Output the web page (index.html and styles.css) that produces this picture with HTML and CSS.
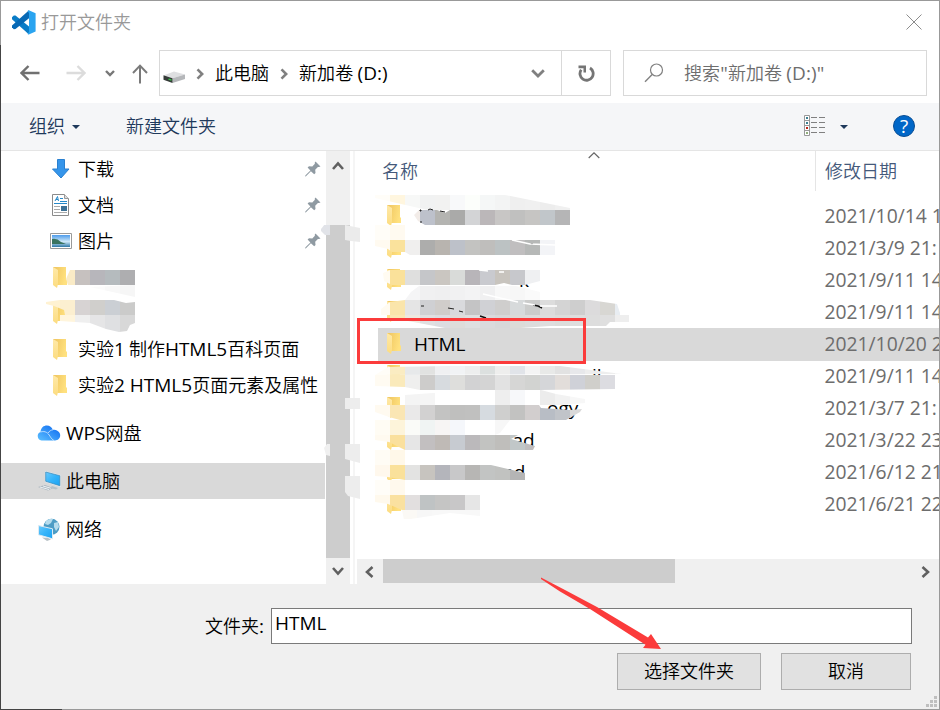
FILE: index.html
```
<!DOCTYPE html>
<html lang="zh-CN">
<head>
  <meta charset="UTF-8" />
  <meta name="viewport" content="width=device-width, initial-scale=1.0" />
  <title>打开文件夹</title>
  <link rel="stylesheet" href="styles.css">
</head>
<body>
  <!-- shared icons -->
  <svg class="defs" width="0" height="0">
    <defs>
      <linearGradient id="fold" x1="0" x2="1" y1="0" y2="0.3">
        <stop offset="0" stop-color="#eec35e"/><stop offset="1" stop-color="#ffe17f"/>
      </linearGradient>
      <linearGradient id="leaf" x1="0" x2="0" y1="0" y2="1">
        <stop offset="0" stop-color="#ffe9a8"/><stop offset="1" stop-color="#fcdc80"/>
      </linearGradient>
      <linearGradient id="sky" x1="0" x2="0" y1="0" y2="1">
        <stop offset="0" stop-color="#4e9cec"/><stop offset="0.55" stop-color="#cfe8f7"/><stop offset="1" stop-color="#2d77a6"/>
      </linearGradient>
      <linearGradient id="cloud" x1="0" x2="1" y1="1" y2="0">
        <stop offset="0" stop-color="#5cc0ff"/><stop offset="1" stop-color="#0a66f0"/>
      </linearGradient>
      <linearGradient id="screen" x1="0" x2="1" y1="0" y2="1">
        <stop offset="0" stop-color="#6cc9fb"/><stop offset="0.5" stop-color="#35b4fa"/><stop offset="1" stop-color="#1ba2f2"/>
      </linearGradient>
      <symbol id="i-folder" viewBox="0 0 14 21">
        <path d="M0 0h13v12l1 1v5H4z" fill="url(#fold)"/>
        <path d="M0 0l5 3v14l-1 4-4-3z" fill="url(#leaf)"/>
      </symbol>
      <symbol id="i-pin" viewBox="0 0 16 16">
        <path d="M10.5 0.5l5 5-1.6.6-1 -.2-2.7 2.9.3 3.2-1.3 1.3-3.3-3.1L1 15.2l-1 .3.5-1.3L5.4 9.6 2.6 6.5 4 5.2l3.3.3 2.6-2.8-.2-1z" fill="#8f9aa2"/>
      </symbol>
    </defs>
  </svg>

  <div class="window">
    <div class="titlebar">
      <svg class="logo" width="25" height="25" viewBox="0 0 25 25">
        <path d="M1 7.2L2.8 5.5 4.5 5.6 18 16.5V24.5L1 9.2z" fill="#0a7cc7"/>
        <path d="M1 17.2L2.8 19.2 4.5 19.1 18 8.3V0.3L1 15.6z" fill="#0769b5"/>
        <path d="M17.8 0.2L24.6 3.3V21.5L17.8 24.6 16.5 24 18 22V3L16.5 1z" fill="#2aa4f0"/>
      </svg>
      <span class="title">打开文件夹</span>
      <svg class="close" width="16" height="16" viewBox="0 0 16 16"><path d="M.5.5l15 15M15.5.5l-15 15" stroke="#8c8c8c" fill="none"/></svg>
    </div>

    <div class="navbar">
      <div class="arrows">
        <svg width="20" height="16" viewBox="0 0 20 16"><path d="M19.5 8H2M8.5 1L1.5 8l7 7" fill="none" stroke="#707070" stroke-width="2.4"/></svg>
        <svg width="20" height="16" viewBox="0 0 20 16"><path d="M.5 8H18M11.5 1l7 7-7 7" fill="none" stroke="#dcdcdc" stroke-width="2.4"/></svg>
        <svg width="10" height="7" viewBox="0 0 10 7"><path d="M1 1l4 4 4-4" fill="none" stroke="#777" stroke-width="2.4"/></svg>
        <svg width="16" height="20" viewBox="0 0 16 20"><path d="M8 19.5V2M1 9l7-7.4L15 9" fill="none" stroke="#7a7a7a" stroke-width="2"/></svg>
      </div>
      <div class="address">
        <svg class="drive" width="23" height="12" viewBox="0 0 23 12">
          <path d="M1 4.2L11 .5 22 3.4 9.5 7.3z" fill="#dedfe1"/>
          <path d="M9.5 7.3L22 3.4V8L9.5 12z" fill="#b5b7ba"/>
          <path d="M.5 4.2l9 3.1V12l-9-3.2z" fill="#353b38"/>
          <path d="M5.5 8.2l3 1" stroke="#38c84a" stroke-width="1.3"/>
        </svg>
        <svg class="sep" width="8" height="12" viewBox="0 0 8 12"><path d="M1.5 1.3L6.2 6l-4.7 4.7" fill="none" stroke="#808080" stroke-width="2.6"/></svg>
        <span class="crumb">此电脑</span>
        <svg class="sep second" width="8" height="12" viewBox="0 0 8 12"><path d="M1.5 1.3L6.2 6l-4.7 4.7" fill="none" stroke="#808080" stroke-width="2.6"/></svg>
        <span class="crumb last">新加卷 <span class="latin">(D:)</span></span>
        <svg class="drop" width="14" height="9" viewBox="0 0 14 9"><path d="M1.2 1.3L7 7l5.8-5.7" fill="none" stroke="#808080" stroke-width="2.8"/></svg>
        <div class="refresh">
          <svg width="17" height="17" viewBox="0 0 17 17"><path d="M3.2 4.8A6.6 6.6 0 1 0 12 3" fill="none" stroke="#757575" stroke-width="2.8"/><path d="M.5.5H8v7H5.5V3.2H.5z" fill="#757575"/></svg>
        </div>
      </div>
      <div class="search">
        <svg width="20" height="20" viewBox="0 0 20 20"><circle cx="12.5" cy="7" r="6" fill="none" stroke="#808080" stroke-width="1.2"/><path d="M8.2 11.5L1 18.7" stroke="#808080" stroke-width="1.4"/></svg>
        <span>搜索<span class="latin">"</span>新加卷 <span class="latin">(D:)"</span></span>
      </div>
    </div>

    <div class="toolbar">
      <span>组织</span>
      <i class="caret"></i>
      <span class="newfolder">新建文件夹</span>
      <svg class="views" width="22" height="22" viewBox="0 0 22 22">
        <path d="M.5.5h5v20h-5zM.5 5.5h5M.5 10.5h5M.5 15.5h5" fill="#fff" stroke="#999"/>
        <path d="M7 2.5h6M15 2.5h6M7 7.5h6M15 7.5h6M7 12.5h6M15 12.5h6M7 17.5h6M15 17.5h6" stroke="#808080"/>
        <path d="M2 2h2v2H2zM2 7h2v2H2z" fill="#3d8092"/><path d="M2 12h2v2H2z" fill="#c02418"/><path d="M2 17h2v2H2z" fill="#8fae7c"/>
      </svg>
      <i class="caret"></i>
      <div class="help">?</div>
    </div>

    <div class="main">
      <div class="tree">
        <div class="node sub">
          <svg width="22" height="22" viewBox="0 0 22 22"><path d="M7.5 1.5h7V11H19l-8 9-8.500-9h5z" fill="#3595ea" stroke="#2a80d0"/></svg>
          <span>下载</span><svg class="pin" width="16" height="16"><use href="#i-pin"/></svg>
        </div>
        <div class="node sub">
          <svg width="22" height="22" viewBox="0 0 22 22">
            <path d="M2.5.5h12l4 4v17h-16z" fill="#fff" stroke="#8b8b8b"/><path d="M14.5.5v4h4" fill="#ddd" stroke="#999"/>
            <path d="M5 7l2.500-4.500L8.500 7M6 5.500h2M10 4.500h3M10 7.500h7M4 9.500h13" stroke="#2689c9" fill="none"/>
            <path d="M4 12.500h6M4 15.500h6M4 18.500h13" stroke="#aaa"/><path d="M11 12h6v5h-6z" fill="#3d7195"/>
          </svg>
          <span>文档</span><svg class="pin" width="16" height="16"><use href="#i-pin"/></svg>
        </div>
        <div class="node sub">
          <svg width="22" height="22" viewBox="0 0 22 22">
            <path d="M.5 3.5h21v15H.5z" fill="#fff" stroke="#9a9a9a"/><path d="M2 5h18v12H2z" fill="url(#sky)"/>
            <path d="M2 9q5-1 9 3l5 2H2z" fill="#3b7460"/>
          </svg>
          <span>图片</span><svg class="pin" width="16" height="16"><use href="#i-pin"/></svg>
        </div>
        <div class="node sub"><svg class="folder" width="14" height="21"><use href="#i-folder"/></svg></div>
        <div class="node sub"><svg class="folder" width="14" height="21"><use href="#i-folder"/></svg></div>
        <div class="node sub"><svg class="folder" width="14" height="21"><use href="#i-folder"/></svg><span>实验<span class="latin">1</span> 制作<span class="latin">HTML5</span>百科页面</span></div>
        <div class="node sub"><svg class="folder" width="14" height="21"><use href="#i-folder"/></svg><span>实验<span class="latin">2 HTML5</span>页面元素及属性</span></div>
        <div class="node root">
          <svg width="24" height="22" viewBox="0 0 24 22">
            <path d="M4.5 18.5a4.5 4.5 0 0 1-1-8.6C4 5.5 6.8 3.5 9.8 3.5c3 0 5 1.8 6 4.2 4 0 7.4 2 7.4 5.6 0 3.3-2.5 5.2-5 5.2z" fill="url(#cloud)"/>
            <path d="M3.5 10c5-1.5 7.5 1 9.5 4.3 1.2 2 2.5 3.5 4 4.2M11 11c1.5-2 3-3 5-3.2" stroke="#d7ecff" fill="none" stroke-width=".8"/>
          </svg>
          <span><span class="latin">WPS</span>网盘</span>
        </div>
        <div class="node root selected">
          <svg width="24" height="22" viewBox="0 0 24 22">
            <path d="M8 1l15.500 4v12L8 12z" fill="#e4eef4"/><path d="M8.700 2l14.100 3.700v10L8.700 11.300z" fill="url(#screen)" stroke="#3686b8" stroke-width=".7"/>
            <path d="M1 17l7-2 8 3-5 2.500z" fill="#aab6bf"/><path d="M3 17l9 2.500M6 16l8 2.300" stroke="#edf1f4"/><path d="M13 18l6 1.500 2-1.500-6-2z" fill="#b6c2ca"/>
          </svg>
          <span>此电脑</span>
        </div>
        <div class="node root">
          <svg width="24" height="23" viewBox="0 0 24 23">
            <circle cx="14.5" cy="8.8" r="8" fill="#4d9cc5"/><path d="M9 3q4-3 7-2l-2 4-3 2-3-1zM17 5l4-1 1 5-3 4-2-4z" fill="#b6dced"/>
            <path d="M1.5 7.5l14 3.3v10l-14-4z" fill="url(#screen)" stroke="#dcebf4"/><path d="M5 19.500l6 .5 3 1.500-4 1.500z" fill="#b7c0c6"/>
          </svg>
          <span>网络</span>
        </div>
      </div>

      <div class="vscroll">
        <div class="up"><svg width="12" height="10" viewBox="0 0 12 10"><path d="M1 8l5-5.5L11 8" fill="none" stroke="#606060" stroke-width="2.6"/></svg></div>
        <div class="vthumb"></div>
        <div class="down"><svg width="12" height="10" viewBox="0 0 12 10"><path d="M1 2l5 5.5L11 2" fill="none" stroke="#606060" stroke-width="2.6"/></svg></div>
      </div>
      <div class="splitter"></div>

      <div class="files">
        <div class="head">
          <div class="name">名称</div>
          <div class="date">修改日期</div>
          <svg class="sort" width="12" height="7" viewBox="0 0 12 7"><path d="M.7 6L6 .9 11.3 6" fill="none" stroke="#666" stroke-width="1.2"/></svg>
        </div>
        <div class="rows" id="rows"></div>
        <div class="hscroll">
          <svg width="9" height="12" viewBox="0 0 9 12"><path d="M7.5 1L2 6l5.5 5" fill="none" stroke="#606060" stroke-width="2.6"/></svg>
          <div class="hthumb"></div>
          <svg width="9" height="12" viewBox="0 0 9 12"><path d="M1.5 1L7 6l-5.5 5" fill="none" stroke="#606060" stroke-width="2.6"/></svg>
        </div>
      </div>
    </div>

    <div class="bottom">
      <div class="field">
        <label>文件夹<span class="latin">:</span></label>
        <div class="input latin">HTML</div>
      </div>
      <div class="actions">
        <div class="btn ok">选择文件夹</div>
        <div class="btn cancel">取消</div>
      </div>
    </div>
    <svg class="grip" width="12" height="12" viewBox="0 0 12 12"><path d="M8 0h3v3H8zM4 4h3v3H4zM8 4h3v3H8zM0 8h3v3H0zM4 8h3v3H4zM8 8h3v3H8z" fill="#bfbfbf"/></svg>

    <!-- pixelated names, highlight box and arrow lie over the dialog -->
    <svg class="marks" width="940" height="710" viewBox="0 0 940 710">
      <path d="M.5 45V710M0 709.5H62" stroke="#444"/>
      <g id="mosaic" shape-rendering="crispEdges"></g>
      <path d="M420 210h1v1h-1zM428 210l2-1 3 1M440 211l5 1M420 222h2M531 244h2M421 306h3M448 308l6 1M459 311l4 1" stroke="#222" fill="none"/>
      <path d="M533 305l5 1 4 2M480 316l6 2" stroke="#111" fill="none" stroke-width="1.5"/>
      <path d="M512 240l18 4 25 1M479 270l9 1M499 272h5M483 294l35 8M523 303l12 2M540 306h17" stroke="#fff" fill="none" stroke-width="1.5"/>
      <rect x="358.5" y="319.5" width="226" height="43" fill="none" stroke="#fb3b3b" stroke-width="3"/>
      <path d="M541 577.5L565 590 597 607 648 637.5 651 634 661 649 643 648 645.5 644.8 590 609 560 591.5 541 579z" fill="#fb3b3b"/>
    </svg>
  </div>

  <script>
    const dates = ["2021/10/14 1", "2021/3/9 21:", "2021/9/11 14", "2021/9/11 14", "2021/10/20 2",
      "2021/9/11 14", "2021/3/7 21:", "2021/3/22 23", "2021/6/12 21", "2021/6/21 22"];
    const leftovers = { 2: "k", 5: "ll", 6: "ogy", 7: "oad", 8: "nd" };

    document.getElementById("rows").innerHTML = dates.map((d, i) => `
      <div class="row ${i === 4 ? "selected" : ""}">
        <svg width="14" height="21"><use href="#i-folder"/></svg>
        <div class="name latin">${i === 4 ? "HTML" : `<span class="rest r${i}">${leftovers[i] || ""}</span>`}</div>
        <div class="date latin">${d}</div>
      </div>`).join("");

    // strips of 15px cells: x, y, height, colours, outline
    const strips = [
      [375, 195, 15, "fffdf8 fff6df f7f8f7 f1f2f2 f2f2f1 f8f9fa fcfefb f5f7f7 f3f4f4 efefef f0f0f0 ededed f0f0f0", "375,195 505,195 570,208 570,210 428,210 410,206 375,198"],
      [405, 210, 15, "f2ece8 bdc1cb b4b4b1 aaaaa9 d3d4d6 bbb7b9 c8c6c5 c0c0bf c6c5c3 c1c6ca b5b5b6", "419,210 437,210 445,213 450,210 570,210 570,225 425,225 418,221 414,215"],
      [375, 225, 15, "fffdf8 fffaf0", "375,225 405,225 405,240 375,240"],
      [375, 240, 15, "fffaf0 fae29c f0efee adadac b8b4af bdc1c9 c3c3c1 bfbebc bcc2c3 c0bebf b6b8b7 f3f4f7", "375,240 555,240 555,255 410,255 405,252 392,252 388,249 375,246"],
      [375, 270, 15, "fffbf1 fae19a dfdfde c5c6c9 cac6c1 d9dbd9 b8b5b9 c9cacf c8c4be c7c8cc eff0f2", "383,273 390,270 540,270 540,281 525,285 512,285 504,283 495,285 392,285 384,281"],
      [405, 285, 15, "f5f5f6 f0f0f1 efeff0 f1f1f2 f3f3f4 f0f0f1 f8f8f8 f7f7f7 fafafa", "411,292 419,286 516,286 540,292 540,300 405,300"],
      [375, 300, 15, "fffbf1 fae5ab e5e5e5 cfd0d3 d0cdca d9dadd c4c4c5 d0d1d5 cfcecd d7dadb cbcccb dcdcdc d4d4d4 cecece dcdbdc d8d7d3 e8edf2", "381,309 390,302 405,300 590,300 617,304 620,313 620,315 381,315"],
      [390, 315, 13, "fbe8b5 eee9df e0e0e1 dcdde1 dedcda dedfe0 dadadc d7d8d9 dcdbd8 dcdcdc dedede dcdddb dedede dddddd dfdfdf eeeeee", "390,315 629,315 629,322 610,322 606,326 550,326 520,328 445,328 408,321 390,320"],
      [375, 366, 9, "fffdf7 faecc2 e7e9ea e1e2e1 eff0f2 f1f3f5 edeeee dce0df eeeeed e1e4e9 f4f4f4 e8e9e8 e2e2e2 e7e8eb eeeeee eeeeee f6f6f6", "388,367 450,366 560,366 622,374 375,375"],
      [375, 375, 15, "fffbf2 faeabb efefee cdcccb d7dbdf dededc d2d2d3 d4d4d4 e2e2e2 d6d6d5 d2d3d1 d5d6d9 e2ddda cfd1d8 d0cfcb dcdce1", "375,375 615,375 615,389 540,390 420,390 405,387 375,386"],
      [405, 390, 15, "f4f4f4 f5f5f5 ffffff ffffff ffffff ffffff eeeeee f7f8fa ffffff ececec f2f2f2 f7f7f7", "405,395 433,393 495,390 541,390 556,394 585,399 585,403 540,407 405,405"],
      [375, 405, 15, "fffaf0 fae6b4 eae9e9 d2d1d1 c3c3c2 bfbfbe c0c0bf d6dbe0 cfcfce c2c2c1 d2cece b8bdc5 c1c4c9 d9d9d9", "375,405 539,405 541,408 570,410 582,409 580,412 566,420 400,420 389,417 375,412"],
      [375, 420, 15, "fffcf4 fdf4da fafbf8 f0f4f3 f7f5f4 f5f7fb ffffff ffffff f7f7f7", "375,420 510,420 500,433 495,435 375,435"],
      [375, 435, 15, "fffaf0 fae09d e6e6e6 c2bfc0 bfbab6 c7cbd1 bbb9bb c2c3c1 bfbebb c1c7c8 bfbdbe cacdd1", "375,435 518,435 511,439 518,441 535,446 533,450 405,450 389,442 375,440"],
      [375, 450, 15, "fffcf5 fff8e9", "375,450 405,450 405,465 375,465"],
      [375, 465, 15, "fff8ed fae19b e3e3e2 c7c4bf b4b5bb c8c8c9 b7b6b4 c2c4c3 c1c2c0 b5b5b5", "375,465 491,465 508,469 525,473 525,480 405,480 388,477 375,476"],
      [375, 480, 15, "fffdf8 fff9ed", "375,480 405,480 405,495 375,495"],
      [375, 495, 15, "fff9ed fae1a0 e2dfdf bfc3c4 c5c5c4 c8c7c8 e6e6e6", "375,495 480,495 480,510 402,510 388,504 375,502"],
      [402, 510, 9, "fbf9f5 f7f7f7 f8f8f8 f8f8f8 f8f8f8 f8f8f8", "402,510 480,510 480,516 450,513 404,520"],
      [45, 255, 15, "ffffff ffffff ffffff fdfdfd", "75,270 90,259 90,270"],
      [60, 270, 15, "faebc6 c6c1bf b7b6bb b5bbbe aeaeb0", "66,279 70,270 135,270 135,285 68,285"],
      [90, 285, 12, "fbfbfb f8f8f8 f6f6f6", "90,287 135,285 135,297"],
      [45, 300, 15, "fff2d2 fcefd0 d7d3d3 d0cfcc cbcfd4 cbcbca", "46,302 60,300 114,300 126,303 135,302 135,315 65,315 64,310 54,306 46,304"],
      [60, 315, 17, "fff5dc efefef e5e5e6 dfe0e2 d8d8d8", "60,314 135,315 135,323 130,325 127,331 119,332 106,329 90,323 60,321"],
      [321, 225, 10, "e1e3e8", "321,229 325,224 330,224 330,235 325,235 321,231"],
      [345, 225, 18, "ebebeb", "345,225 360,228 360,242 351,241 345,240"],
      [345, 398, 11, "ededed", "345,398 360,398 360,409 345,409"],
      [323, 443, 13, "f0f0f0", "324,448 327,444 330,444 330,456 326,455"],
      [345, 443, 20, "ededed", "345,444 360,444 360,463 345,459"],
      [345, 475, 25, "ededed", "345,476 360,476 360,499 348,496 345,492"]
    ];

    let out = "";
    strips.forEach(([x, y, h, colors, outline], n) => {
      out += `<clipPath id="c${n}"><polygon points="${outline}"/></clipPath><g clip-path="url(#c${n})">`;
      colors.split(" ").forEach((c, i) => {
        out += `<rect x="${x + i * 15}" y="${y}" width="15" height="${h}" fill="#${c}"/>`;
      });
      out += "</g>";
    });
    document.getElementById("mosaic").innerHTML = out;
  </script>
</body>
</html>
```

FILE: styles.css
```
* {
  box-sizing: border-box;
}
body {
  margin: 0;
  width: 940px;
  height: 710px;
  overflow: hidden;
  font-family: "Noto Sans CJK SC", sans-serif;
  font-size: 18px;
  font-weight: 350;
  line-height: 24px;
  color: #000;
}
svg {
  display: block;
  flex: none;
}
.latin {
  font-family: "Open Sans", "Noto Sans CJK SC", sans-serif;
  font-size: 19px;
  font-weight: 400;
}
.defs, .marks {
  position: absolute;
  left: 0;
  top: 0;
}
.window {
  position: relative;
  width: 940px;
  height: 710px;
  border: 1px solid #999;
  background: #fff;
  display: flex;
  flex-direction: column;
}
.marks {
  left: -1px;
  top: -1px;
}

/* title and navigation */
.titlebar {
  height: 43px;
  padding: 0 17px 0 10px;
  display: flex;
  align-items: center;
}
.title {
  flex: 1;
  margin: -3px 0 0 5px;
  color: #999;
}
.close {
  margin-top: -1px;
}
.navbar {
  height: 59px;
  padding: 6px 12px 0 19px;
  display: flex;
}
.arrows {
  width: 139px;
  height: 46px;
  display: flex;
  align-items: center;
}
.arrows svg:nth-child(2) { margin-left: 26px; }
.arrows svg:nth-child(3) { margin-left: 19px; }
.arrows svg:nth-child(4) { margin: 2px 0 0 17px; }
.address {
  width: 452px;
  height: 46px;
  border: 1px solid #d9d9d9;
  display: flex;
  align-items: center;
}
.drive { margin: 7px 0 0 3px; }
.sep { margin: 1px 0 0 10px; }
.crumb { margin: -2px 0 0 11px; }
.sep.second { margin-left: 11px; }
.crumb.last { flex: 1; letter-spacing: 0.1px; }
.drop { margin-right: 16px; }
.refresh {
  width: 49px;
  height: 44px;
  border-left: 1px solid #d9d9d9;
  display: flex;
  align-items: center;
  justify-content: center;
}
.search {
  flex: 1;
  height: 46px;
  margin-left: 12px;
  padding-left: 20px;
  border: 1px solid #d9d9d9;
  color: #6d6d6d;
  display: flex;
  align-items: center;
  gap: 20px;
}
.search > span {
  margin-top: -1px;
  letter-spacing: 0.1px;
}
.toolbar {
  height: 48px;
  padding: 0 24px 0 28px;
  background: #f5f6f8;
  border-bottom: 1px solid #e5e5e5;
  color: #1e395b;
  display: flex;
  align-items: center;
}
.toolbar > span {
  margin-top: -3px;
}
.caret {
  margin-left: 7px;
  border: 4px solid transparent;
  border-top-color: #1e395b;
  border-bottom: 0;
}
.newfolder {
  flex: 1;
  margin-left: 46px;
}
.views {
  margin: -1px 1px 0 0;
}
.views + .caret { margin-left: 13px; }
.help {
  width: 22px;
  height: 22px;
  margin: -2px 0 0 45px;
  border: 1px solid #0a4e94;
  border-radius: 50%;
  background: #0067c8;
  color: #fff;
  font: 19px/20px "Open Sans", sans-serif;
  text-align: center;
}

/* folder tree */
.main {
  height: 433px;
  display: flex;
}
.tree {
  width: 324px;
}
.node {
  height: 36px;
  display: flex;
  align-items: center;
  white-space: nowrap;
}
.node.sub {
  padding-left: 49px;
}
.node.sub > span {
  margin: -2px 0 0 6px;
  flex: 1;
}
.node .folder {
  margin: 0 5px 0 3px;
}
.node .pin {
  margin-right: 4px;
}
.node.root {
  margin-top: 12px;
  padding-left: 36px;
}
.node.root > span {
  margin: -2px 0 0 5px;
}
.selected {
  background: #d9d9d9;
}
.vscroll {
  width: 24px;
  background: #f0f0f0;
  display: flex;
  flex-direction: column;
  align-items: center;
  margin-left: 1px;
}
.up {
  height: 74px;
  padding-top: 10px;
}
.vthumb {
  width: 24px;
  height: 333px;
  background: #cdcdcd;
}
.down {
  padding-top: 8px;
}
.splitter {
  width: 2px;
  margin: 0 2px 0 3px;
  background: #f5f5f5;
}

/* file list */
.files {
  flex: 1;
  min-width: 0;
  display: flex;
  flex-direction: column;
}
.head {
  position: relative;
  height: 40px;
  display: flex;
  line-height: 39px;
  color: #44597a;
}
.head .name {
  width: 459px;
  padding-left: 25px;
  border-right: 1px solid #e5e5e5;
}
.head .date {
  padding-left: 9px;
}
.sort {
  position: absolute;
  left: 231px;
  top: 1px;
}
.rows {
  height: 368px;
  padding: 9px 0 0 21px;
  overflow: hidden;
}
.row {
  height: 32px;
  padding-left: 9px;
  display: flex;
  align-items: center;
  white-space: nowrap;
}
.row.selected {
  height: 33px;
  margin-bottom: -1px;
  padding-bottom: 1px;
}
.row > svg {
  margin-top: -1px;
}
.row .name {
  width: 411px;
  margin-left: 13px;
}
.row .date {
  margin-left: 1px;
  width: 115px;
  overflow: hidden;
  color: #6d6d6d;
  font-size: 19.3px;
}
.rest { display: block; }
.r2 { padding-left: 105px; }
.r5 { padding-left: 178px; }
.r6 { padding-left: 133px; }
.r7 { padding-left: 87px; }
.r8 { padding-left: 88px; }
.hscroll {
  height: 25px;
  padding: 0 9px 0 8px;
  background: #f0f0f0;
  display: flex;
  align-items: center;
}
.hthumb {
  width: 292px;
  height: 24px;
  margin: 0 auto 1px 9px;
  background: #cdcdcd;
}

/* folder field and buttons */
.bottom {
  flex: 1;
  padding: 24px 27px 0 204px;
  background: #f0f0f0;
}
.field {
  display: flex;
  align-items: center;
}
.field label {
  width: 66px;
  margin-top: -2px;
  white-space: nowrap;
}
.input {
  flex: 1;
  height: 36px;
  padding: 2px 3px;
  border: 1px solid #7a7a7a;
  background: #fff;
}
.actions {
  margin: 9px 1px 0 0;
  display: flex;
  justify-content: flex-end;
  gap: 20px;
}
.btn {
  width: 130px;
  height: 37px;
  border: 1px solid #adadad;
  background: #e1e1e1;
  text-align: center;
  line-height: 33px;
}
.btn.ok {
  width: 144px;
}
.grip {
  position: absolute;
  right: 1px;
  bottom: 1px;
}
```
